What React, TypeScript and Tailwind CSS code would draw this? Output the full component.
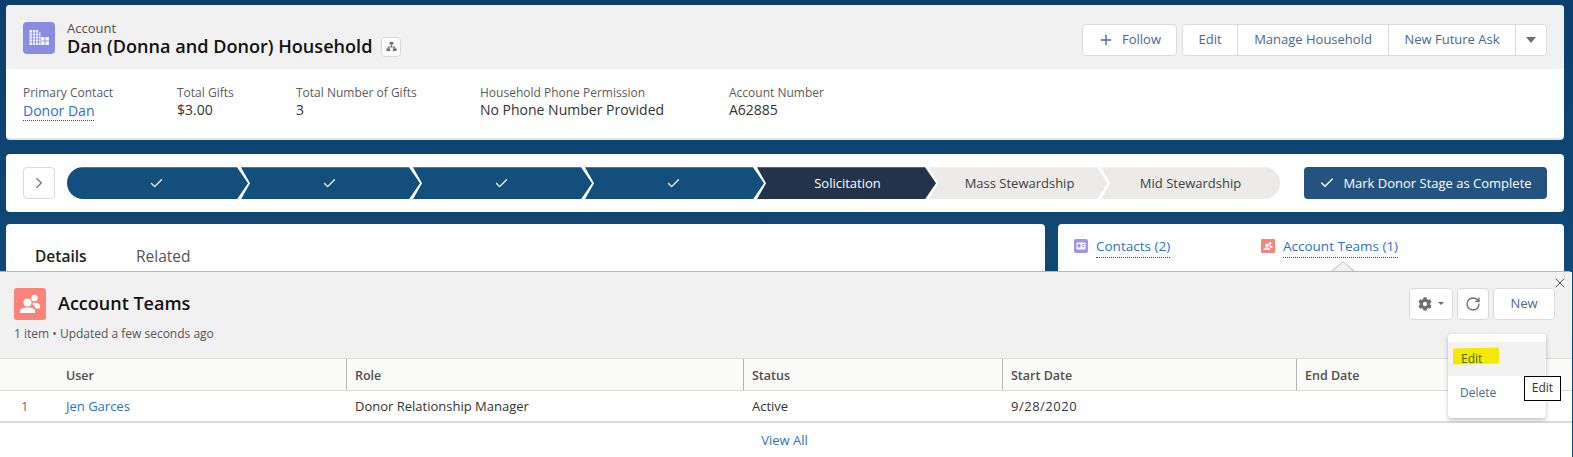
import { Check, ChevronRight, Plus, RotateCw, X } from "lucide-react";
import { FaCog } from "react-icons/fa";

const BuildingIcon = () => (
  <svg viewBox="0 0 32 32" className="h-8 w-8">
    <rect width="32" height="32" rx="4" fill="#8a8ce4" />
    <path fill="#fff" fillOpacity="0.92" d="M6.500 8h9v2h2v13h-11zM18 15h8v8h-8z" />
    <path
      stroke="#8a8ce4"
      strokeWidth="0.8"
      d="M9.500 8v15M12.500 8v15M15.500 8v15M6.500 11h11M6.500 14h11M6.500 17h11M6.500 20h11M22 15v8M18 19h8"
    />
  </svg>
);

const TeamIcon = ({ size = 32 }: { size?: number }) => (
  <svg viewBox="0 0 32 32" width={size} height={size}>
    <rect width="32" height="32" rx="3" fill="#fc8378" />
    <circle cx="20.500" cy="10" r="3.200" fill="#fff" />
    <path fill="#fff" d="M18.500 15c3-.8 7 0 7.500 2v3.500h-4.500c-.4-1.800-1.500-3.300-3-4z" />
    <circle cx="13.500" cy="14.500" r="4" fill="#fff" />
    <path fill="#fff" d="M6 25v-2c0-2 3-3.500 7.500-3.500S21 21 21 23v2z" />
  </svg>
);

const ContactIcon = () => (
  <svg viewBox="0 0 14 14" className="h-3.5 w-3.5">
    <rect width="14" height="14" rx="2" fill="#a094ed" />
    <rect x="2.500" y="3.500" width="9" height="7" rx="1" fill="#fff" />
    <rect x="3.500" y="5" width="3" height="3.500" fill="#a094ed" />
    <path stroke="#a094ed" d="M8 5.500h2.500M8 7.500h2.500" />
  </svg>
);

const HierarchyIcon = () => (
  <svg viewBox="0 0 12 12" className="h-[11px] w-[11px]" fill="#706e6b">
    <rect x="4" y="1" width="4" height="3" />
    <rect x="0.500" y="8" width="4" height="3" />
    <rect x="7.500" y="8" width="4" height="3" />
    <path d="M5.500 4h1v2h3.500v2h-1V7H3v1H2V6h3.500z" />
  </svg>
);

const fields = [
  { label: "Total Gifts", value: "$3.00", width: "w-[119px]" },
  { label: "Total Number of Gifts", value: "3", width: "w-[184px]" },
  {
    label: "Household Phone Permission",
    value: "No Phone Number Provided",
    width: "w-[249px]",
  },
  { label: "Account Number", value: "A62885", width: "w-[120px]" },
];

const btn = "flex items-center justify-center text-[13px] text-[#48698f]";
const chevronMid =
  "[clip-path:polygon(0_0,calc(100%-11px)_0,100%_50%,calc(100%-11px)_100%,0_100%,9px_50%)]";
const tableCols = "grid-cols-[57px_289px_397px_259px_294px_1fr]";
const headCell = "flex h-full items-center border-l border-[#b5b5b5] pl-[8px]";

function Stage({
  className,
  children,
}: {
  className: string;
  children: React.ReactNode;
}) {
  return (
    <div
      className={`flex h-8 items-center justify-center text-[13px] ${className}`}
    >
      {children}
    </div>
  );
}

export default function App() {
  return (
    <div className="flex h-[457px] w-[1573px] flex-col overflow-hidden bg-gradient-to-b from-[#0b3f6c] to-[#114f7c] pt-[5px] font-['Open_Sans',sans-serif] text-[#16325c]">
      <div className="ml-[6px] w-[1558px] overflow-hidden rounded border-b-2 border-[#e4e4e4] bg-white">
        <div className="flex h-16 items-start bg-[#f1f1f1] pl-[17px] pr-[17px] pt-[17px]">
          <BuildingIcon />
          <div className="ml-3 -mt-[1px]">
            <div className="text-[13px] leading-[14px] text-[#4f4f4f]">
              Account
            </div>
            <div className="flex items-center">
              <span className="text-[18.1px] font-semibold leading-[23px] text-[#111]">
                Dan (Donna and Donor) Household
              </span>
              <span className="ml-[9px] flex h-5 w-5 items-center justify-center rounded border border-[#d8d8d8] bg-white">
                <HierarchyIcon />
              </span>
            </div>
          </div>
          <div className="ml-auto mt-[2px] flex h-8 gap-[5px]">
            <div
              className={`${btn} w-[95px] gap-2 rounded border border-[#dddbda] bg-white`}
            >
              <Plus size={16} strokeWidth={2} />
              Follow
            </div>
            <div className="flex rounded border border-[#dddbda] bg-white">
              <div className={`${btn} w-[55px] border-r border-[#dddbda]`}>
                Edit
              </div>
              <div className={`${btn} w-[151px] border-r border-[#dddbda]`}>
                Manage Household
              </div>
              <div className={`${btn} w-[127px] border-r border-[#dddbda]`}>
                New Future Ask
              </div>
              <div className="flex w-[30px] items-center justify-center">
                <div className="h-0 w-0 border-x-[5px] border-t-[6px] border-x-transparent border-t-[#706e6b]" />
              </div>
            </div>
          </div>
        </div>
        <div className="flex h-[70px] pl-[17px] pt-[16px] text-[13px] text-[#333]">
          <div className="w-[154px]">
            <div className="text-[12px] leading-[16px] text-[#5c5c5c]">
              Primary Contact
            </div>
            <div className="inline-block border-b border-dotted border-[#0b5cab] text-[14px] leading-[19px] text-[#2f6fd0]">
              Donor Dan
            </div>
          </div>
          {fields.map((f) => (
            <div key={f.label} className={f.width}>
              <div className="text-[12px] leading-[16px] text-[#5c5c5c]">
                {f.label}
              </div>
              <div className="text-[14px] leading-[18px]">{f.value}</div>
            </div>
          ))}
        </div>
      </div>

      <div className="ml-[6px] mt-[14px] flex h-[58px] w-[1558px] items-center rounded bg-white pl-[17px] pr-[17px]">
        <div className="flex h-8 w-8 items-center justify-center rounded border border-[#dddbda] text-[#706e6b]">
          <ChevronRight size={18} strokeWidth={1.5} />
        </div>
        <div className="ml-3 flex w-[1213px]">
          <Stage
            className={`w-[181px] rounded-l-full bg-[#124f7c] pr-[3px] text-white [clip-path:polygon(0_0,calc(100%-11px)_0,100%_50%,calc(100%-11px)_100%,0_100%)]`}
          >
            <Check size={15} strokeWidth={2} />
          </Stage>
          {[0, 1, 2].map((i) => (
            <Stage
              key={i}
              className={`-ml-[7px] w-[179px] bg-[#124f7c] pr-[3px] text-white ${chevronMid}`}
            >
              <Check size={15} strokeWidth={2} />
            </Stage>
          ))}
          <Stage
            className={`-ml-[7px] w-[179px] bg-[#22334a] pl-[2px] text-[12.7px] font-medium text-white ${chevronMid}`}
          >
            Solicitation
          </Stage>
          <Stage
            className={`-ml-[7px] w-[179px] bg-[#ecebea] pl-[2px] text-[12.8px] text-[#3e3e3c] ${chevronMid}`}
          >
            Mass Stewardship
          </Stage>
          <Stage
            className={`-ml-[7px] flex-1 rounded-r-full bg-[#ecebea] text-[#3e3e3c] [clip-path:polygon(0_0,100%_0,100%_100%,0_100%,9px_50%)]`}
          >
            Mid Stewardship
          </Stage>
        </div>
        <div className="ml-auto flex h-8 w-[243px] items-center justify-center gap-2 rounded bg-[#24537f] text-[13px] font-medium text-white">
          <Check size={16} strokeWidth={2} />
          Mark Donor Stage as Complete
        </div>
      </div>

      <div className="ml-[6px] mt-[12px] flex h-[47px] w-[1558px] gap-[13px]">
        <div className="flex w-[1039px] rounded-t bg-white pl-[29px] pt-[21px] text-[15.5px]">
          <span className="w-[101px] font-semibold text-[#222]">Details</span>
          <span className="text-[#555]">Related</span>
        </div>
        <div className="relative flex flex-1 rounded-t bg-white pl-[16px] pt-[12px] text-[13.5px] text-[#2f6fd0]">
          <div className="flex w-[187px] items-start gap-2">
            <span className="mt-[3px]">
              <ContactIcon />
            </span>
            <span className="border-b border-dotted border-[#0b5cab] leading-[21px]">
              Contacts (2)
            </span>
          </div>
          <div className="flex items-start gap-2">
            <span className="mt-[3px]">
              <TeamIcon size={14} />
            </span>
            <span className="border-b border-dotted border-[#0b5cab] leading-[21px]">
              Account Teams (1)
            </span>
          </div>
          <div className="absolute bottom-[-1px] left-[272px] h-0 w-0 border-x-[13px] border-b-[11px] border-x-transparent border-b-[#c9c9c9]" />
          <div className="absolute bottom-[-2px] left-[273px] h-0 w-0 border-x-[12px] border-b-[11px] border-x-transparent border-b-[#f1f1f1]" />
        </div>
      </div>

      <div className="relative w-[1572px] flex-1 rounded-tr border-t border-[#b8b8b8] bg-white">
        <div className="flex h-[86px] items-start bg-[#f1f1f1] pl-[14px] pr-[17px] pt-[16px]">
          <div>
            <div className="flex items-center">
              <TeamIcon />
              <span className="ml-3 text-[18px] font-semibold text-[#111]">
                Account Teams
              </span>
            </div>
            <div className="mt-[6px] text-[12px] leading-[16px] text-[#555]">
              1 item • Updated a few seconds ago
            </div>
          </div>
          <div className="ml-auto flex h-8 gap-[4px]">
            <div className="flex w-[44px] items-center justify-center gap-[6px] rounded border border-[#dddbda] bg-white text-[#706e6b]">
              <FaCog size={14} />
              <div className="h-0 w-0 border-x-[3px] border-t-[3px] border-x-transparent border-t-[#706e6b]" />
            </div>
            <div className="flex w-[32px] items-center justify-center rounded border border-[#dddbda] bg-white text-[#706e6b]">
              <RotateCw size={16} strokeWidth={2} />
            </div>
            <div className={`${btn} w-[62px] rounded border border-[#dddbda] bg-white`}>
              New
            </div>
          </div>
        </div>

        <div className={`grid h-[33px] ${tableCols} items-center border-y border-[#dddbda] bg-[#fafaf9] text-[12.5px] font-semibold text-[#514f4d]`}>
          <span />
          <span className="pl-[9px] pt-[3px]">User</span>
          <span className={`${headCell} pt-[3px]`}>Role</span>
          <span className={`${headCell} pt-[3px]`}>Status</span>
          <span className={`${headCell} pt-[3px]`}>Start Date</span>
          <span className={`${headCell} pt-[3px]`}>End Date</span>
        </div>
        <div className={`grid h-[32px] ${tableCols} items-center border-b-2 border-[#dddbda] pt-[1px] text-[13px] text-[#333]`}>
          <span className="pl-[21px] text-[#706e6b]">1</span>
          <span className="pl-[9px] text-[#2f6fd0]">Jen Garces</span>
          <span className="pl-[9px]">Donor Relationship Manager</span>
          <span className="pl-[9px]">Active</span>
          <span className="pl-[9px] tracking-[0.5px]">9/28/2020</span>
          <span />
        </div>
        <div className="flex h-[34px] items-center justify-center pr-[3px] pt-[2px] text-[13px] text-[#2f6fd0]">
          View All
        </div>

        <X
          className="absolute right-[4px] top-[3px] text-[#555]"
          size={16}
          strokeWidth={1.5}
        />

        <div className="absolute left-[1448px] top-[62px] w-[98px] rounded bg-white py-2 text-[12px] text-[#48698f] shadow-[0_2px_4px_rgba(0,0,0,0.25)]">
          <div className="relative flex h-[34px] items-center bg-[#f3f2f2] pl-[13px] text-[#4a6a10]">
            <span className="absolute left-[5px] top-[6px] h-[16px] w-[46px] -rotate-1 bg-[#f5e900]" />
            <span className="relative">Edit</span>
          </div>
          <div className="flex h-[34px] items-center pl-[12px]">Delete</div>
        </div>
        <div className="absolute left-[1524px] top-[104px] flex h-[25px] w-[37px] items-center justify-center border border-black bg-white text-[12px] text-[#333]">
          Edit
        </div>
      </div>
    </div>
  );
}
